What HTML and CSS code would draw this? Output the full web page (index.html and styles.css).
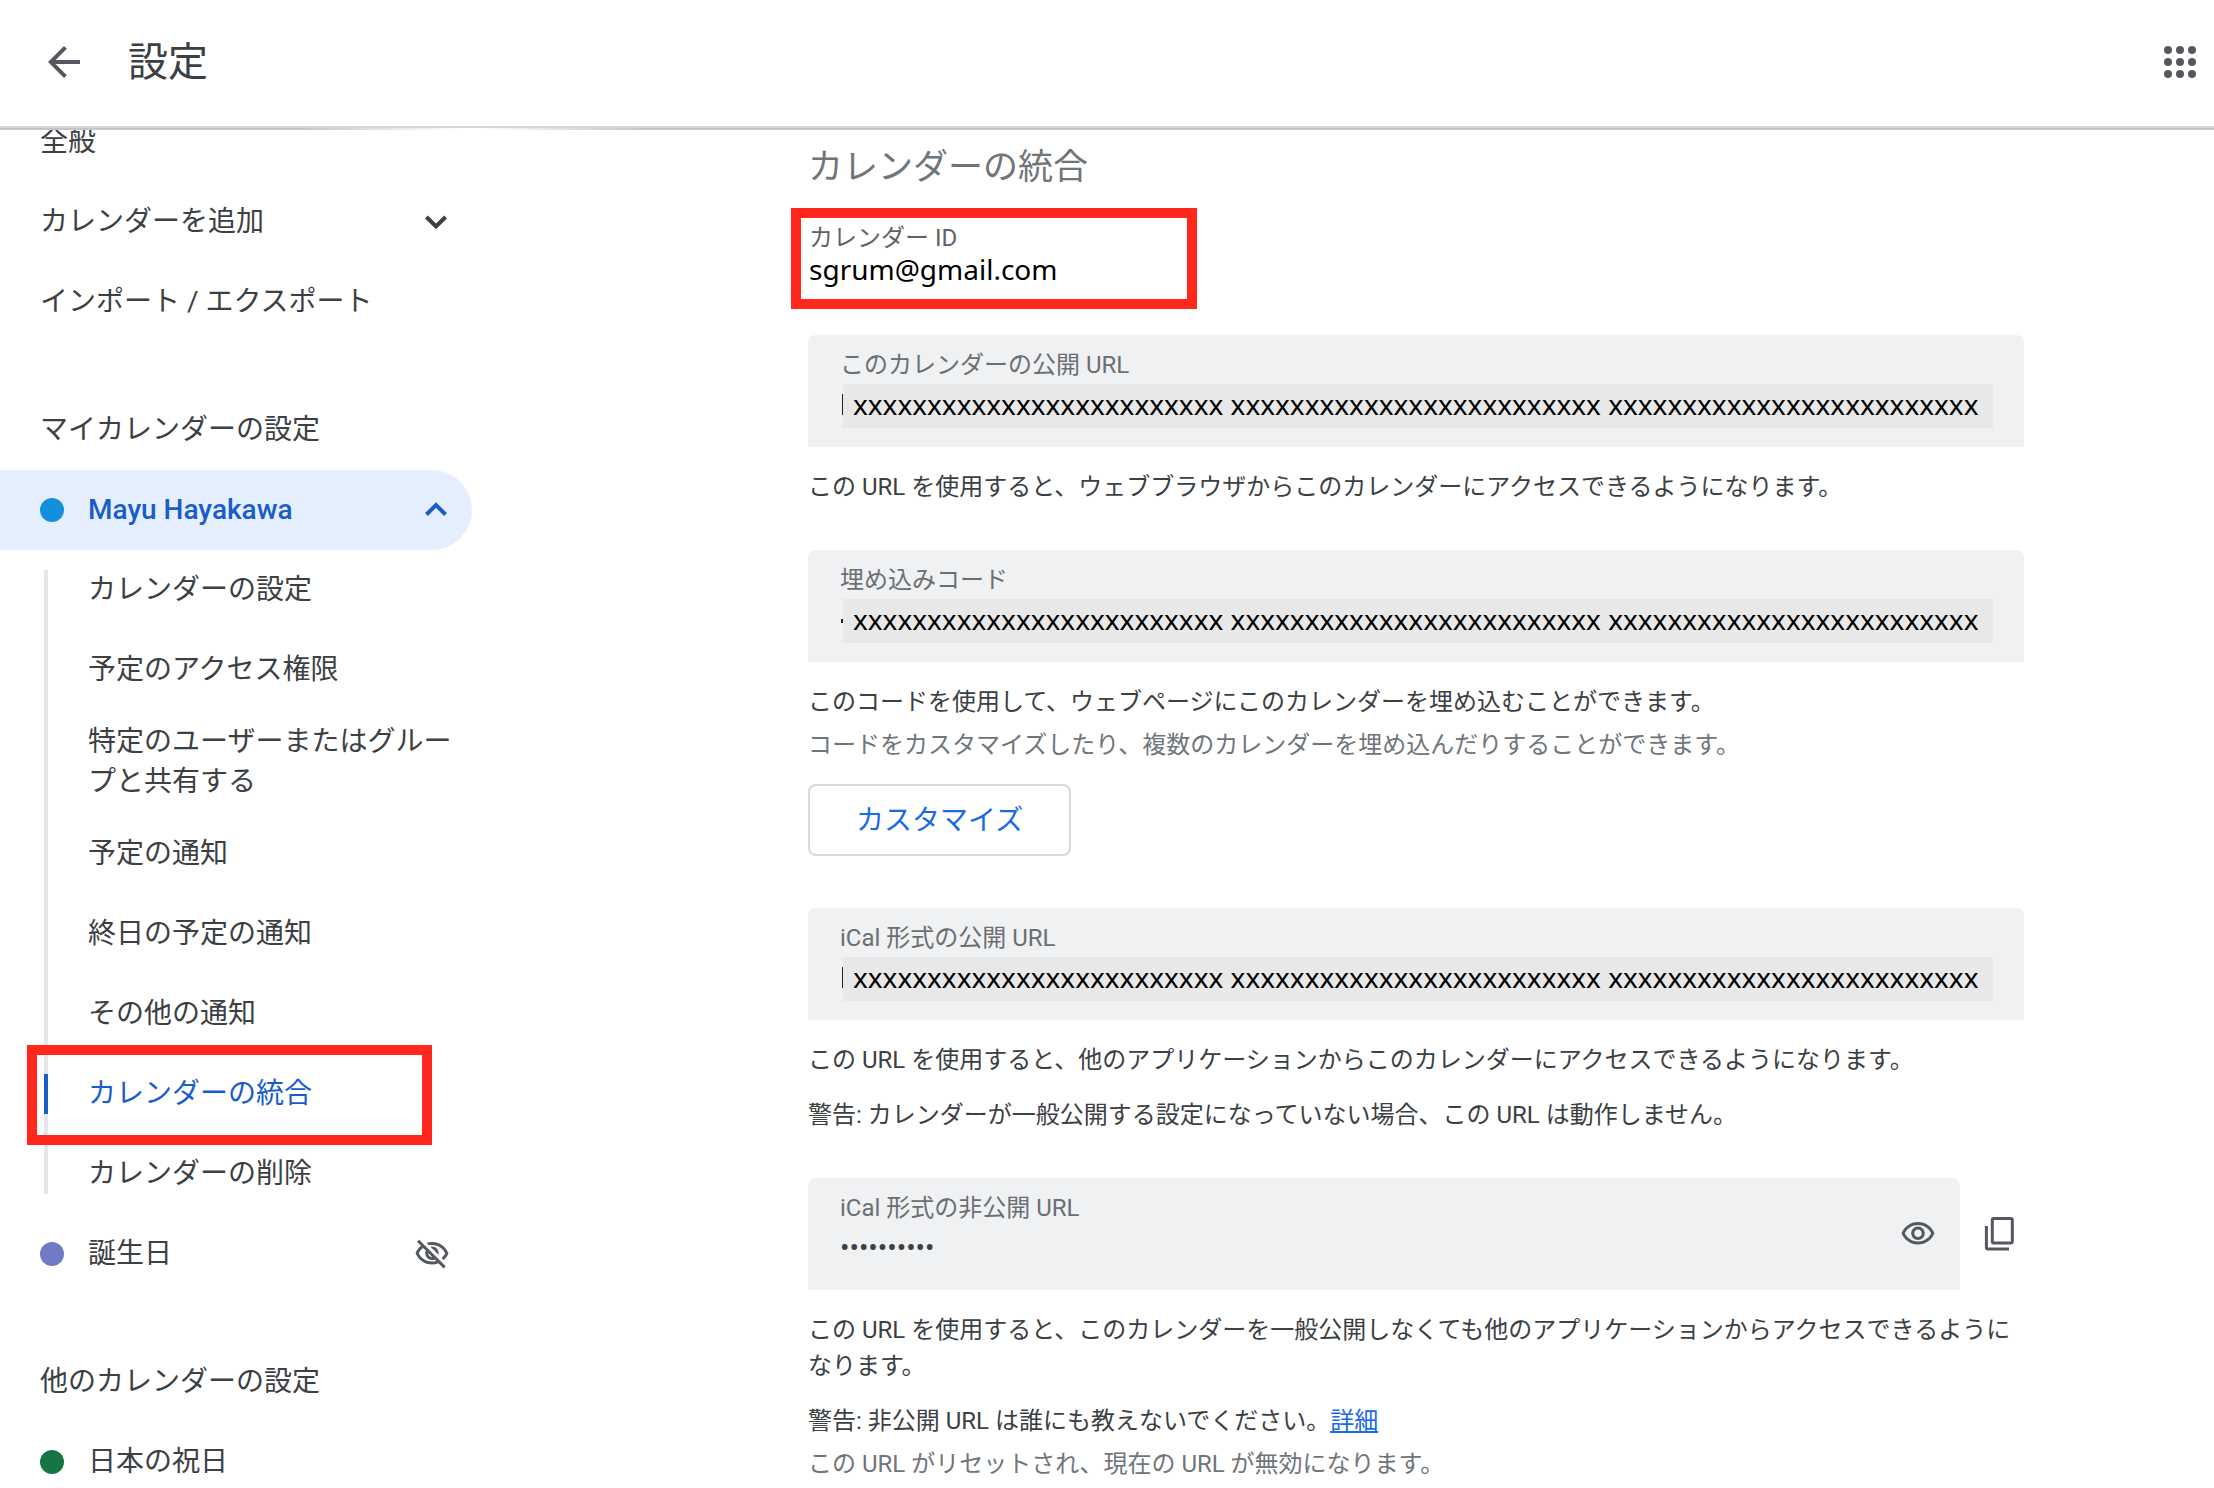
FILE: index.html
```html
<!DOCTYPE html>
<html lang="ja">
<head>
<meta charset="utf-8">
<meta name="viewport" content="width=device-width, initial-scale=1">
<title>設定</title>
<link rel="stylesheet" href="styles.css">
</head>
<body>
<div class="app">
  <header class="topbar">
    <button class="icon-button" type="button" aria-label="戻る">
      <svg class="icon-lg" viewBox="0 0 24 24"><path d="M20 11H7.83l5.59-5.59L12 4l-8 8 8 8 1.41-1.41L7.83 13H20v-2z"/></svg>
    </button>
    <h1 class="topbar-title">設定</h1>
    <button class="icon-button apps" type="button" aria-label="アプリ">
      <svg class="icon-lg" viewBox="0 0 24 24"><circle cx="6" cy="6" r="2"/><circle cx="12" cy="6" r="2"/><circle cx="18" cy="6" r="2"/><circle cx="6" cy="12" r="2"/><circle cx="12" cy="12" r="2"/><circle cx="18" cy="12" r="2"/><circle cx="6" cy="18" r="2"/><circle cx="12" cy="18" r="2"/><circle cx="18" cy="18" r="2"/></svg>
    </button>
  </header>

  <div class="body">
    <nav class="sidebar">
      <a class="row" href="#general">全般</a>
      <button class="row" type="button">カレンダーを追加
        <svg class="chevron" viewBox="0 0 48 48"><path d="M14.500 19l9.500 9.500 9.500-9.500"/></svg>
      </button>
      <a class="row" href="#import">インポート / エクスポート</a>

      <h2 class="row group">マイカレンダーの設定</h2>
      <button class="row selected" type="button"><span class="dot blue"></span>Mayu Hayakawa
        <svg class="chevron" viewBox="0 0 48 48"><path d="M14.500 28.500L24 19l9.500 9.500"/></svg>
      </button>
      <ul class="tree">
        <li><a class="row" href="#settings">カレンダーの設定</a></li>
        <li><a class="row" href="#access">予定のアクセス権限</a></li>
        <li><a class="row" href="#share">特定のユーザーまたはグループと共有する</a></li>
        <li><a class="row" href="#notify">予定の通知</a></li>
        <li><a class="row" href="#allday">終日の予定の通知</a></li>
        <li><a class="row" href="#other">その他の通知</a></li>
        <li class="current"><a class="row" href="#integrate">カレンダーの統合</a></li>
        <li><a class="row" href="#delete">カレンダーの削除</a></li>
      </ul>
      <a class="row" href="#birthday"><span class="dot violet"></span>誕生日
        <svg class="icon-md hidden-mark" viewBox="0 0 24 24"><path d="M12 6c3.790 0 7.170 2.130 8.820 5.500-.590 1.220-1.420 2.270-2.410 3.120l1.410 1.410c1.390-1.230 2.490-2.770 3.180-4.530C21.270 7.110 17 4 12 4c-1.270 0-2.490.200-3.640.570l1.650 1.650C10.660 6.090 11.320 6 12 6zm-1.070 1.140L13 9.210c.570.250 1.030.710 1.280 1.280l2.070 2.070c.080-.340.140-.700.140-1.070C16.500 9.010 14.480 7 12 7c-.370 0-.720.050-1.070.140zM2.010 3.870l2.680 2.680C3.060 7.830 1.770 9.530 1 11.500 2.730 15.890 7 19 12 19c1.520 0 2.980-.290 4.320-.820l3.420 3.420 1.410-1.410L3.420 2.450 2.010 3.870zm7.500 7.500l2.610 2.610c-.040.010-.080.020-.120.020-1.380 0-2.500-1.120-2.500-2.500 0-.050.010-.080.010-.130zm-3.400-3.400l1.750 1.750c-.230.550-.360 1.150-.360 1.780 0 2.480 2.020 4.500 4.500 4.500.630 0 1.230-.130 1.770-.360l.980.980c-.880.240-1.800.380-2.750.380-3.790 0-7.170-2.130-8.820-5.500.700-1.430 1.720-2.610 2.930-3.530z"/></svg>
      </a>

      <h2 class="row group">他のカレンダーの設定</h2>
      <a class="row" href="#holidays"><span class="dot green"></span>日本の祝日</a>
    </nav>

    <main class="content">
      <h2 class="title">カレンダーの統合</h2>
      <div class="calendar-id">
        <div class="id-label">カレンダー ID</div>
        <div class="id-value">sgrum@gmail.com</div>
      </div>

      <section class="block">
        <div class="field">
          <label for="public-url">このカレンダーの公開 URL</label>
          <div class="masked caret"><input id="public-url" type="text" readonly value="xxxxxxxxxxxxxxxxxxxxxxxxx xxxxxxxxxxxxxxxxxxxxxxxxx xxxxxxxxxxxxxxxxxxxxxxxxx"></div>
        </div>
        <p>この URL を使用すると、ウェブブラウザからこのカレンダーにアクセスできるようになります。</p>
      </section>

      <section class="block embed">
        <div class="field">
          <label for="embed">埋め込みコード</label>
          <div class="masked speck"><input id="embed" type="text" readonly value="xxxxxxxxxxxxxxxxxxxxxxxxx xxxxxxxxxxxxxxxxxxxxxxxxx xxxxxxxxxxxxxxxxxxxxxxxxx"></div>
        </div>
        <p>このコードを使用して、ウェブページにこのカレンダーを埋め込むことができます。</p>
        <p class="note">コードをカスタマイズしたり、複数のカレンダーを埋め込んだりすることができます。</p>
        <button class="outlined" type="button">カスタマイズ</button>
      </section>

      <section class="block">
        <div class="field">
          <label for="ical-public">iCal 形式の公開 URL</label>
          <div class="masked caret"><input id="ical-public" type="text" readonly value="xxxxxxxxxxxxxxxxxxxxxxxxx xxxxxxxxxxxxxxxxxxxxxxxxx xxxxxxxxxxxxxxxxxxxxxxxxx"></div>
        </div>
        <p>この URL を使用すると、他のアプリケーションからこのカレンダーにアクセスできるようになります。</p>
        <p class="warning">警告: カレンダーが一般公開する設定になっていない場合、この URL は動作しません。</p>
      </section>

      <section class="block">
        <div class="field-row">
          <div class="field secret">
            <div class="secret-text">
              <label for="ical-private">iCal 形式の非公開 URL</label>
              <input class="password" id="ical-private" type="password" readonly value="0123456789">
            </div>
            <button class="icon-button" type="button" aria-label="表示">
              <svg class="icon-md" viewBox="0 0 24 24"><path d="M12 6c3.790 0 7.170 2.130 8.820 5.500C19.170 14.870 15.790 17 12 17s-7.170-2.130-8.820-5.500C4.830 8.130 8.210 6 12 6m0-2C7 4 2.730 7.110 1 11.500 2.730 15.890 7 19 12 19s9.270-3.110 11-7.500C21.270 7.110 17 4 12 4zm0 5c1.380 0 2.500 1.120 2.500 2.500S13.380 14 12 14s-2.500-1.120-2.500-2.500S10.620 9 12 9m0-2c-2.480 0-4.500 2.020-4.500 4.500S9.520 16 12 16s4.500-2.020 4.500-4.500S14.480 7 12 7z"/></svg>
            </button>
          </div>
          <button class="icon-button" type="button" aria-label="コピー">
            <svg class="icon-md line" viewBox="0 0 36 36"><rect x="10.300" y="2.500" width="20" height="24.500" rx="1.500"/><path d="M4.400 10v21.500q0 1.500 1.500 1.500H27"/></svg>
          </button>
        </div>
        <p>この URL を使用すると、このカレンダーを一般公開しなくても他のアプリケーションからアクセスできるようになります。</p>
        <p class="warning">警告: 非公開 URL は誰にも教えないでください。<a href="#details">詳細</a></p>
        <p class="note">この URL がリセットされ、現在の URL が無効になります。</p>
      </section>
    </main>
  </div>
</div>
</body>
</html>
```
FILE: styles.css
```css
* { box-sizing: border-box; }

body {
  margin: 0;
  background: #fff;
  color: #3c4043;
  font-family: Roboto, "Noto Sans CJK JP", sans-serif;
  font-size: 24px;
  line-height: 36px;
}

h1, h2, p, ul { margin: 0; padding: 0; font-weight: 400; }
ul { list-style: none; }

button, input {
  border: 0;
  padding: 0;
  background: none;
  color: inherit;
  font: inherit;
}

svg { display: block; fill: currentColor; }
.icon-lg { width: 48px; height: 48px; }
.icon-md { width: 36px; height: 36px; }
.line { fill: none; stroke: currentColor; stroke-width: 3; }
.icon-button { flex: none; color: #55585e; }

.app {
  display: flex;
  flex-direction: column;
  height: 100vh;
  overflow: hidden;
}

/* Top bar */
.topbar {
  position: relative;
  z-index: 1;
  flex: none;
  display: flex;
  align-items: center;
  height: 128px;
  padding: 0 10px 2px 40px;
  background: #fff;
  border-bottom: 2px solid #d6d6dc;
}
.topbar::after {
  content: "";
  position: absolute;
  inset: 100% 0 auto;
  margin-top: 2px;
  height: 2px;
  background: linear-gradient(90deg, #c4c5c7 300px, #fff0 460px, #fff0 480px, #c4c5c7 640px);
}
.topbar-title {
  margin-left: 40px;
  padding-top: 2px;
  font-size: 40px;
  line-height: 48px;
  color: #3c4043;
}
.apps { margin-left: auto; }

.body {
  flex: 1;
  display: flex;
  min-height: 0;
}

/* Sidebar */
.sidebar {
  flex: none;
  width: 472px;
  margin-top: -26px;
}
.row {
  display: flex;
  align-items: center;
  width: 100%;
  min-height: 80px;
  padding: 12px 12px 12px 40px;
  color: #3c4043;
  font-size: 28px;
  line-height: 40px;
  text-align: left;
  text-decoration: none;
}
.group { margin-top: 48px; }
.selected {
  border-radius: 0 40px 40px 0;
  background: #e4eefd;
  color: #1a5cc8;
  font-weight: 500;
}
.chevron {
  width: 48px;
  height: 48px;
  margin-left: auto;
  fill: none;
  stroke: currentColor;
  stroke-width: 4;
}
.dot {
  width: 24px;
  height: 24px;
  margin-right: 24px;
  border-radius: 50%;
}
.blue { background: #138fde; }
.violet { background: #707bc3; }
.green { background: #167540; }
.hidden-mark { margin: 0 10px 0 auto; color: #55585e; }

.tree { position: relative; }
.tree .row { padding-left: 88px; }
.tree::before,
.current::before {
  content: "";
  position: absolute;
  left: 44px;
  top: 20px;
  bottom: 20px;
  width: 4px;
  background: #e4e6ea;
}
.current { position: relative; }
.current::before { background: #1a5cc8; }
.current .row { color: #1a5cc8; }
.current::after {
  content: "";
  position: absolute;
  inset: -9px 40px -11px 27px;
  border: 10px solid #ff281c;
}

/* Content */
.content {
  flex: 1;
  max-width: 1552px;
  padding: 14px 0 0 336px;
}
.title {
  padding-top: 2px;
  color: #70757a;
  font-size: 35px;
  line-height: 48px;
}
.calendar-id {
  width: 406px;
  margin: 16px 0 26px -17px;
  padding: 4px 8px 15px;
  border: 10px solid #ff281c;
}
.id-label { line-height: 32px; color: #5f6368; }
.id-value {
  color: #000;
  font-family: "Noto Sans", sans-serif;
  font-size: 28px;
  line-height: 30px;
}
.block { margin-bottom: 45px; }
.embed { margin-bottom: 52px; }

.field {
  height: 112px;
  padding: 12px 31px 0 32px;
  border-radius: 8px 8px 0 0;
  background: #eff1f3;
  margin-bottom: 22px;
}
.field label {
  display: block;
  margin-bottom: 1px;
  color: #6b6f74;
}
.masked {
  position: relative;
  margin-left: 3px;
  background: #e8e8e8;
}
.masked input {
  display: block;
  width: 100%;
  height: 44px;
  padding: 0 0 4px 10px;
  color: #000;
  font-family: "Noto Sans", sans-serif;
  font-size: 28px;
}
.masked::before {
  content: "";
  position: absolute;
  right: 100%;
  background: #202124;
}
.caret::before { top: 10px; width: 1px; height: 21px; }
.speck::before { top: 20px; width: 2px; height: 4px; }

.note { margin-top: 7px; color: #70757a; }
.warning { margin-top: 19px; }
.outlined {
  display: block;
  height: 72px;
  margin-top: 21px;
  padding: 2px 46px 0;
  border: 2px solid #d6d8dc;
  border-radius: 8px;
  color: #1a6ae4;
  font-size: 28px;
}

.field-row {
  display: flex;
  align-items: center;
  gap: 22px;
  margin-bottom: 22px;
  padding-right: 6px;
}
.secret {
  flex: 1;
  display: flex;
  align-items: center;
  margin: 0;
  padding: 0 24px 0 32px;
}
.secret-text { flex: 1; height: 88px; }
.password {
  display: block;
  width: 100%;
  height: 40px;
  font-size: 28px;
}
a { color: #1a6ae4; }
```
